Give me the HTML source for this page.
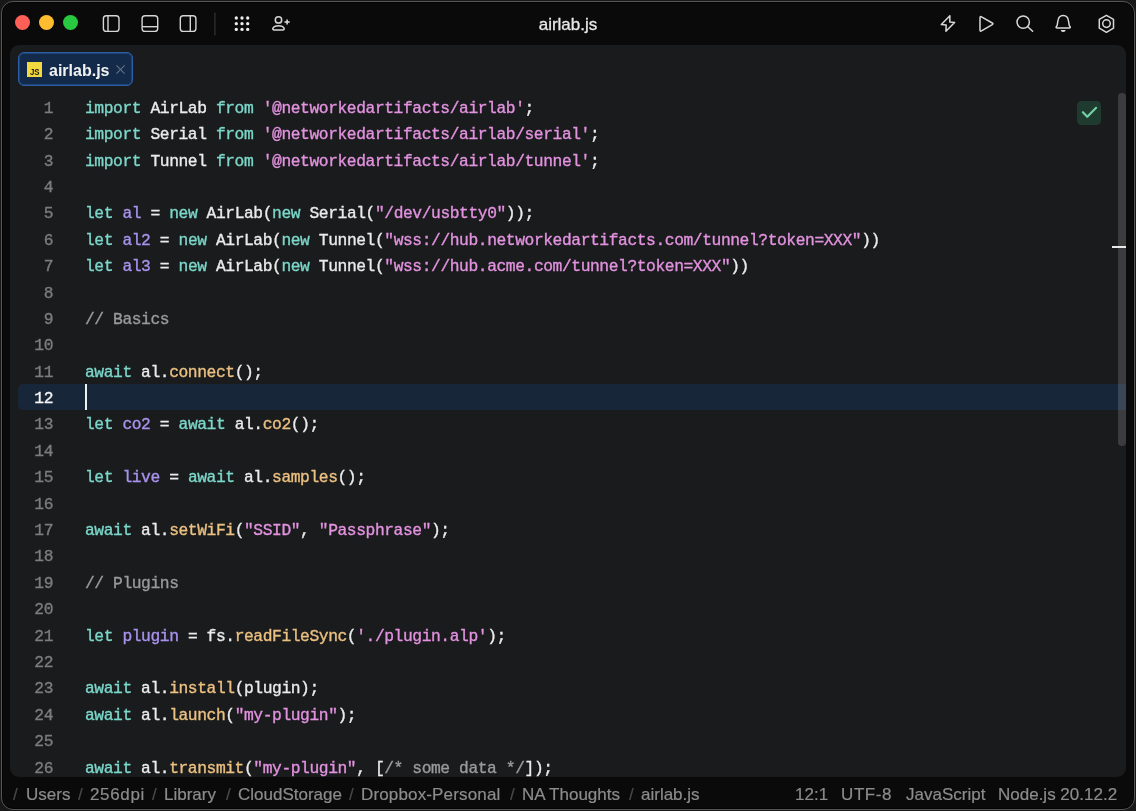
<!DOCTYPE html>
<html><head><meta charset="utf-8">
<style>
*{margin:0;padding:0;box-sizing:border-box}
html,body{width:1136px;height:811px;overflow:hidden;background:#181818;-webkit-font-smoothing:antialiased}
body{position:relative;font-family:"Liberation Sans",sans-serif}
#root{position:absolute;left:0;top:0;width:1136px;height:811px;will-change:transform}
#win{position:absolute;left:1px;top:1px;width:1134px;height:809px;border:1px solid #565656;border-radius:12px;background:#0a0a0a;box-shadow:inset 0 0 0 1px #040404}
.tl{position:absolute;top:14.8px;width:15px;height:15px;border-radius:50%}
.ic{position:absolute}
#title{position:absolute;left:0;width:1136px;top:14.8px;text-align:center;color:#e8e8e8;font-size:17px;line-height:20px;-webkit-text-stroke:0.3px currentColor}
#panel{position:absolute;left:10px;top:45px;width:1116px;height:732px;background:#1a1b1d;border-radius:9px;overflow:hidden}
#tab{position:absolute;left:17.5px;top:52px;width:115.5px;height:34px;background:#132a4a;border:1px solid #2c5fa6;border-radius:6px;box-shadow:inset 0 0 0 0.7px rgba(40,90,160,0.7)}
#tab .js{position:absolute;left:8.3px;top:8.8px;width:15px;height:15px;background:#f3d940}
#tab .js span{position:absolute;left:3.4px;top:5.6px;font-size:9.6px;line-height:9px;color:#1d1a08;font-weight:bold;letter-spacing:-0.1px;transform:scaleX(0.82);transform-origin:0 0}
#tab .nm{position:absolute;left:30.5px;top:8.2px;font-size:16px;line-height:20px;font-weight:bold;color:#f2f2f2}
#tab .x{position:absolute;left:97.8px;top:12.4px;width:9px;height:9px}
#hl{position:absolute;left:17.5px;top:383.8px;width:1108.5px;height:26.3px;background:#172638;border-radius:5px 0 0 5px}
#cursor{position:absolute;left:84.5px;top:384.3px;width:2.5px;height:25.7px;background:#f0f0f0}
#clip{position:absolute;left:0;top:45px;width:1126px;height:732px;overflow:hidden;will-change:transform}
#code{position:absolute;left:0;top:50.8px;-webkit-text-stroke:0.35px currentColor;width:1126px;font-family:"Liberation Mono",monospace;font-size:16.3px;line-height:26.4px;letter-spacing:-0.42px;color:#ebebeb}
.ln{display:inline-block;width:53px;text-align:right;color:#7c7c7c}
.ln.cur{color:#f5f5f5}
.tx{position:absolute;left:85px;white-space:pre}
.row{position:relative;height:26.4px}
.k{color:#7bd7c9}
.s{color:#e292df}
.m{color:#ebc080}
.v{color:#a992ee}
.c{color:#9a9a9a}
#sb{position:absolute;left:1118.4px;top:93.3px;width:7.4px;height:353px;background:rgba(255,255,255,0.15);border-radius:3.7px}
#mk{position:absolute;left:1111.6px;top:246px;width:14px;height:2px;background:#e8e8e8}
#chk{position:absolute;left:1076.5px;top:100.7px;width:24px;height:24px;background:#1f3b2f;border-radius:4.5px}
#status{position:absolute;left:0;top:777px;width:1136px;height:32px;font-size:17px;color:#8c8c8c}
#status span{position:absolute;top:7.5px;line-height:20px;-webkit-text-stroke:0.2px currentColor}
#status .sl{color:#4a4a4a}
</style></head><body><div id="root">
<div id="win"></div>
<div class="tl" style="left:14.9px;background:#fe5f57"></div>
<div class="tl" style="left:38.8px;background:#febc2e"></div>
<div class="tl" style="left:62.7px;background:#28c840"></div>

<!-- left toolbar icons -->
<svg class="ic" style="left:0;top:0" width="310" height="45" fill="none" stroke="#d6d6d6" stroke-width="1.4">
  <rect x="103.4" y="15.8" width="15.6" height="15.6" rx="3"/>
  <line x1="108" y1="15.8" x2="108" y2="31.4"/>
  <rect x="142.1" y="15.8" width="15.6" height="15.6" rx="3"/>
  <line x1="142.1" y1="26.7" x2="157.7" y2="26.7"/>
  <rect x="180.3" y="15.8" width="15.6" height="15.6" rx="3"/>
  <line x1="190.3" y1="15.8" x2="190.3" y2="31.4"/>
  <line x1="214.9" y1="12.4" x2="214.9" y2="35.6" stroke="#333" stroke-width="1.2"/>
  <g fill="#ececec" stroke="none">
    <circle cx="236.3" cy="18" r="1.65"/><circle cx="242" cy="18" r="1.65"/><circle cx="247.7" cy="18" r="1.65"/>
    <circle cx="236.3" cy="23.7" r="1.65"/><circle cx="242" cy="23.7" r="1.65"/><circle cx="247.7" cy="23.7" r="1.65"/>
    <circle cx="236.3" cy="29.4" r="1.65"/><circle cx="242" cy="29.4" r="1.65"/><circle cx="247.7" cy="29.4" r="1.65"/>
  </g>
  <circle cx="278.5" cy="19.9" r="3.2" stroke-width="1.5"/>
  <path d="M274 29.9 h9 a1.2 1.2 0 0 0 1.15-1.5 c-0.8-1.8-3.1-2.6-5.65-2.6 s-4.85 0.8-5.65 2.6 a1.2 1.2 0 0 0 1.15 1.5z" stroke-width="1.5"/>
  <line x1="284.5" y1="22" x2="289.7" y2="22" stroke-width="1.6"/><line x1="287.1" y1="19.4" x2="287.1" y2="24.6" stroke-width="1.6"/>
</svg>

<div id="title">airlab.js</div>

<!-- right toolbar icons -->
<svg class="ic" style="left:0;top:0" width="1136" height="45" fill="none" stroke="#d8d8d8" stroke-width="1.5" stroke-linejoin="round" stroke-linecap="round">
  <path d="M949.9 15.8 L941.3 24.6 L946.2 25 L945.9 31.3 L954.6 22.4 L949.8 22 Z"/>
  <path d="M980 17.6 Q980 15.9 981.5 16.8 L992.3 23 Q993.6 23.8 992.3 24.6 L981.5 30.9 Q980 31.8 980 30 Z"/>
  <circle cx="1023.2" cy="22.1" r="6.2"/><line x1="1027.8" y1="26.7" x2="1032.6" y2="31.2"/>
  <path d="M1063.2 15.6 C1066.6 15.6 1068.3 18.3 1068.6 21.5 L1069.2 25.2 C1069.3 26 1070.2 26.6 1070.3 27 C1070.4 27.6 1070 27.9 1069.4 27.9 L1057 27.9 C1056.4 27.9 1056 27.6 1056.1 27 C1056.2 26.6 1057.1 26 1057.2 25.2 L1057.8 21.5 C1058.1 18.3 1059.8 15.6 1063.2 15.6 Z"/>
  <path d="M1060.8 30.1 h4.8 a2.4 1.9 0 0 1 -4.8 0z" fill="#e0e0e0" stroke="none"/>
  <path d="M1106.4 15.3 L1113.5 19.4 L1113.5 28.2 L1106.4 32.3 L1099.3 28.2 L1099.3 19.4 Z"/>
  <circle cx="1106.5" cy="23.6" r="3.8"/>
</svg>

<div id="panel"></div>
<div id="tab"><div class="js"><span>JS</span></div><div class="nm">airlab.js</div>
<svg class="x" viewBox="0 0 10 10" stroke="#5f7489" stroke-width="1.2"><line x1="0.5" y1="0.5" x2="9.5" y2="9.5"/><line x1="9.5" y1="0.5" x2="0.5" y2="9.5"/></svg>
</div>
<div id="hl"></div>
<div id="sb"></div>
<div id="mk"></div>
<div id="chk"><svg width="24" height="24" fill="none" stroke="#72cfa3" stroke-width="2.2" stroke-linecap="round" stroke-linejoin="round"><path d="M5.9 11.2 L10.3 15.8 L19.1 6.8"/></svg></div>

<div id="clip"><div id="code">
<div class="row"><span class="ln">1</span><span class="tx"><span class="k">import</span> AirLab <span class="k">from</span> <span class="s">'@networkedartifacts/airlab'</span>;</span></div>
<div class="row"><span class="ln">2</span><span class="tx"><span class="k">import</span> Serial <span class="k">from</span> <span class="s">'@networkedartifacts/airlab/serial'</span>;</span></div>
<div class="row"><span class="ln">3</span><span class="tx"><span class="k">import</span> Tunnel <span class="k">from</span> <span class="s">'@networkedartifacts/airlab/tunnel'</span>;</span></div>
<div class="row"><span class="ln">4</span></div>
<div class="row"><span class="ln">5</span><span class="tx"><span class="k">let</span> <span class="v">al</span> = <span class="k">new</span> AirLab(<span class="k">new</span> Serial(<span class="s">"/dev/usbtty0"</span>));</span></div>
<div class="row"><span class="ln">6</span><span class="tx"><span class="k">let</span> <span class="v">al2</span> = <span class="k">new</span> AirLab(<span class="k">new</span> Tunnel(<span class="s">"wss://hub.networkedartifacts.com/tunnel?token=XXX"</span>))</span></div>
<div class="row"><span class="ln">7</span><span class="tx"><span class="k">let</span> <span class="v">al3</span> = <span class="k">new</span> AirLab(<span class="k">new</span> Tunnel(<span class="s">"wss://hub.acme.com/tunnel?token=XXX"</span>))</span></div>
<div class="row"><span class="ln">8</span></div>
<div class="row"><span class="ln">9</span><span class="tx"><span class="c">// Basics</span></span></div>
<div class="row"><span class="ln">10</span></div>
<div class="row"><span class="ln">11</span><span class="tx"><span class="k">await</span> al.<span class="m">connect</span>();</span></div>
<div class="row"><span class="ln cur">12</span></div>
<div class="row"><span class="ln">13</span><span class="tx"><span class="k">let</span> <span class="v">co2</span> = <span class="k">await</span> al.<span class="m">co2</span>();</span></div>
<div class="row"><span class="ln">14</span></div>
<div class="row"><span class="ln">15</span><span class="tx"><span class="k">let</span> <span class="v">live</span> = <span class="k">await</span> al.<span class="m">samples</span>();</span></div>
<div class="row"><span class="ln">16</span></div>
<div class="row"><span class="ln">17</span><span class="tx"><span class="k">await</span> al.<span class="m">setWiFi</span>(<span class="s">"SSID"</span>, <span class="s">"Passphrase"</span>);</span></div>
<div class="row"><span class="ln">18</span></div>
<div class="row"><span class="ln">19</span><span class="tx"><span class="c">// Plugins</span></span></div>
<div class="row"><span class="ln">20</span></div>
<div class="row"><span class="ln">21</span><span class="tx"><span class="k">let</span> <span class="v">plugin</span> = fs.<span class="m">readFileSync</span>(<span class="s">'./plugin.alp'</span>);</span></div>
<div class="row"><span class="ln">22</span></div>
<div class="row"><span class="ln">23</span><span class="tx"><span class="k">await</span> al.<span class="m">install</span>(plugin);</span></div>
<div class="row"><span class="ln">24</span><span class="tx"><span class="k">await</span> al.<span class="m">launch</span>(<span class="s">"my-plugin"</span>);</span></div>
<div class="row"><span class="ln">25</span></div>
<div class="row"><span class="ln">26</span><span class="tx"><span class="k">await</span> al.<span class="m">transmit</span>(<span class="s">"my-plugin"</span>, [<span class="c">/* some data */</span>]);</span></div>
</div></div>
<div id="cursor"></div>

<div id="status">
<span class="sl" style="left:13px">/</span><span style="left:26px">Users</span>
<span class="sl" style="left:78px">/</span><span style="left:90px;letter-spacing:0.65px">256dpi</span>
<span class="sl" style="left:152px">/</span><span style="left:164px">Library</span>
<span class="sl" style="left:226px">/</span><span style="left:238px">CloudStorage</span>
<span class="sl" style="left:349px">/</span><span style="left:361px;letter-spacing:0.15px">Dropbox-Personal</span>
<span class="sl" style="left:510px">/</span><span style="left:522px">NA Thoughts</span>
<span class="sl" style="left:629px">/</span><span style="left:641px">airlab.js</span>
<span style="left:795px">12:1</span>
<span style="left:841px;letter-spacing:0.6px">UTF-8</span>
<span style="left:906px">JavaScript</span>
<span style="left:998px">Node.js 20.12.2</span>
</div>
</div></body></html>
